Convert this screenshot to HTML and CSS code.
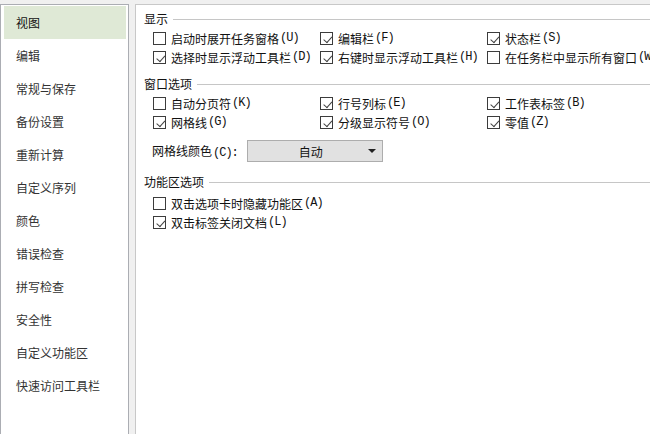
FILE: index.html
```html
<!DOCTYPE html>
<html lang="zh-CN">
<head>
    <meta charset="UTF-8">
    <meta name="viewport" content="width=device-width, initial-scale=1.0">
    <title>选项</title>
    <link rel="stylesheet" href="styles.css">
</head>
<body>
    <div class="window">
        <ul class="sidebar">
            <li class="nav-item active">视图</li>
            <li class="nav-item">编辑</li>
            <li class="nav-item">常规与保存</li>
            <li class="nav-item">备份设置</li>
            <li class="nav-item">重新计算</li>
            <li class="nav-item">自定义序列</li>
            <li class="nav-item">颜色</li>
            <li class="nav-item">错误检查</li>
            <li class="nav-item">拼写检查</li>
            <li class="nav-item">安全性</li>
            <li class="nav-item">自定义功能区</li>
            <li class="nav-item">快速访问工具栏</li>
        </ul>

        <div class="panel">
            <div class="section">
                <div class="section-title">显示</div>
                <div class="options">
                    <label class="option"><span class="box"></span>启动时展开任务窗格<span class="key">(U)</span></label>
                    <label class="option"><span class="box checked"></span>编辑栏<span class="key">(F)</span></label>
                    <label class="option"><span class="box checked"></span>状态栏<span class="key">(S)</span></label>
                    <label class="option"><span class="box checked"></span>选择时显示浮动工具栏<span class="key">(D)</span></label>
                    <label class="option"><span class="box checked"></span>右键时显示浮动工具栏<span class="key">(H)</span></label>
                    <label class="option"><span class="box"></span>在任务栏中显示所有窗口<span class="key">(W)</span></label>
                </div>
            </div>

            <div class="section">
                <div class="section-title">窗口选项</div>
                <div class="options">
                    <label class="option"><span class="box"></span>自动分页符<span class="key">(K)</span></label>
                    <label class="option"><span class="box checked"></span>行号列标<span class="key">(E)</span></label>
                    <label class="option"><span class="box checked"></span>工作表标签<span class="key">(B)</span></label>
                    <label class="option"><span class="box checked"></span>网格线<span class="key">(G)</span></label>
                    <label class="option"><span class="box checked"></span>分级显示符号<span class="key">(O)</span></label>
                    <label class="option"><span class="box checked"></span>零值<span class="key">(Z)</span></label>
                </div>
                <div class="color-row">
                    <span>网格线颜色<span class="key">(C):</span></span>
                    <div class="select">
                        <span class="select-value">自动</span>
                        <span class="select-arrow"></span>
                    </div>
                </div>
            </div>

            <div class="section ribbon">
                <div class="section-title">功能区选项</div>
                <div class="options single">
                    <label class="option"><span class="box"></span>双击选项卡时隐藏功能区<span class="key">(A)</span></label>
                    <label class="option"><span class="box checked"></span>双击标签关闭文档<span class="key">(L)</span></label>
                </div>
            </div>
        </div>
    </div>
</body>
</html>
```

FILE: styles.css
```css
body {
    margin: 0;
    background-color: #f0f0f0;
    font-family: "Noto Sans CJK SC", "Noto Sans", sans-serif;
    font-size: 12px;
    color: #111111;
    overflow: hidden;
}

.window {
    display: flex;
    gap: 6px;
    height: 100vh;
    padding-top: 4px;
    box-sizing: border-box;
}

.sidebar {
    list-style: none;
    margin: 0;
    padding: 1px 2px 0 3px;
    width: 122px;
    background-color: #ffffff;
    border: 1px solid #abadb3;
    border-bottom: none;
    flex-shrink: 0;
}

.nav-item {
    height: 33px;
    line-height: 33px;
    padding-left: 12px;
    color: #333333;
}

.nav-item.active {
    background-color: #dfe9d6;
    color: #111111;
}

.panel {
    flex: 1;
    background-color: #ffffff;
    border: 1px solid #c8c8c8;
    border-right: none;
    border-bottom: none;
    padding: 4px 0 0 8px;
    overflow: hidden;
    white-space: nowrap;
}

.section + .section {
    margin-top: 7px;
}

.section.ribbon {
    margin-top: 10px;
}

.section-title {
    display: flex;
    align-items: center;
    line-height: 20px;
    height: 20px;
}

.section-title::after {
    content: "";
    flex: 1;
    height: 1px;
    margin-left: 5px;
    background-color: #c6c6c6;
}

.options {
    display: grid;
    grid-template-columns: 167px 167px 1fr;
    padding-left: 9px;
}

.options.single {
    grid-template-columns: 1fr;
    margin-top: 2px;
}

.option {
    display: flex;
    align-items: center;
    height: 19px;
    line-height: 19px;
}

.key {
    font-family: "Liberation Mono", monospace;
    font-size: 12px;
    letter-spacing: -1px;
    margin-left: 1px;
}

.box {
    width: 11px;
    height: 11px;
    margin-right: 5px;
    border: 1px solid #3c3c3c;
    background-color: #ffffff;
    flex-shrink: 0;
    position: relative;
}

.box.checked::after {
    content: "";
    position: absolute;
    left: 2px;
    top: 1px;
    width: 7px;
    height: 4px;
    border-left: 1px solid #444444;
    border-bottom: 1px solid #444444;
    transform: rotate(-48deg) translate(-1px, 2px);
}

.color-row {
    display: flex;
    align-items: center;
    gap: 9px;
    margin-top: 8px;
    padding-left: 8px;
}

.select {
    display: flex;
    align-items: center;
    width: 134px;
    height: 20px;
    background-color: #e1e1e1;
    border: 1px solid #adadad;
}

.select-value {
    flex: 1;
    text-align: center;
    padding-left: 6px;
}

.select-arrow {
    width: 0;
    height: 0;
    margin-right: 6px;
    border-left: 4px solid transparent;
    border-right: 4px solid transparent;
    border-top: 4px solid #222222;
}
```
